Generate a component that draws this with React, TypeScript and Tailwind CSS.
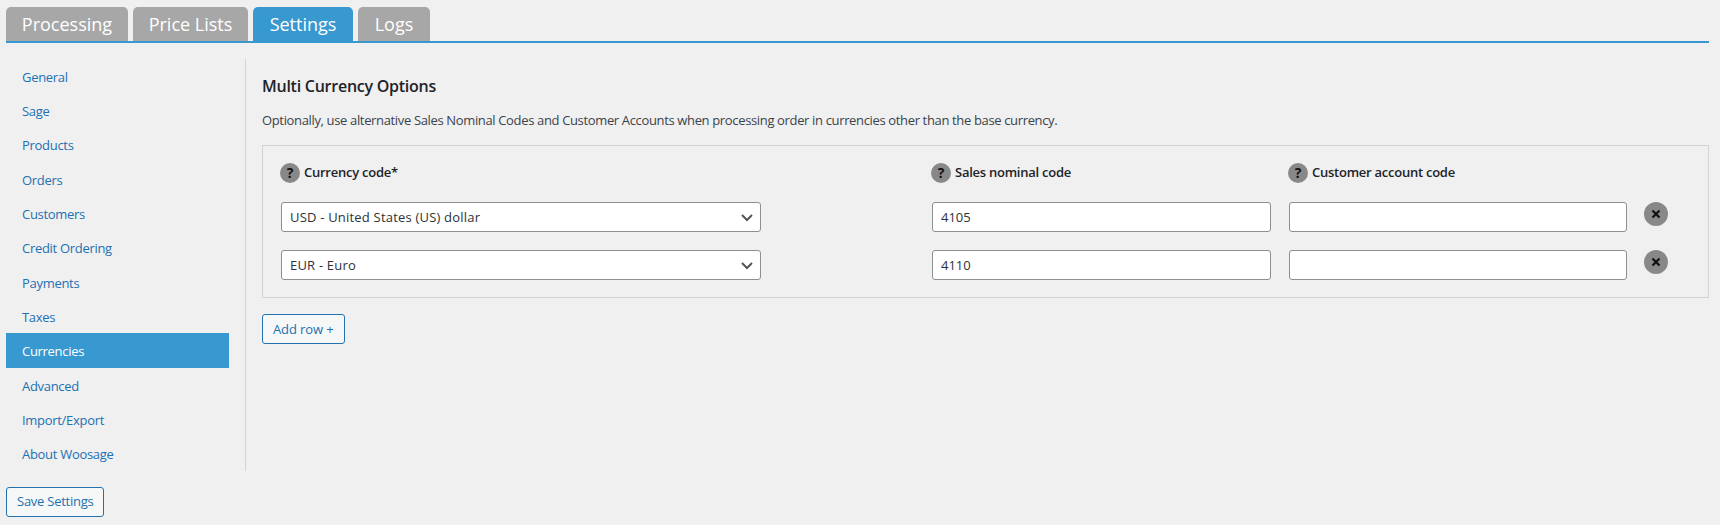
const font = "[font-family:'Open_Sans','Noto_Sans',sans-serif]";

const tabs = [
  { label: "Processing", w: "w-[122px]", active: false },
  { label: "Price Lists", w: "w-[115px]", active: false },
  { label: "Settings", w: "w-[100px]", active: true },
  { label: "Logs", w: "w-[72px]", active: false },
];

const nav = ["General", "Sage", "Products", "Orders", "Customers", "Credit Ordering", "Payments", "Taxes", "Currencies", "Advanced", "Import/Export", "About Woosage"];

function Help() {
  return (
    <span className="flex h-5 w-5 shrink-0 items-center justify-center rounded-full bg-[#888888] text-[14px] font-bold leading-none text-[#111111]">?</span>
  );
}

function Label({ text, className }: { text: string; className: string }) {
  return (
    <div className={`flex items-center gap-[4px] ${className}`}>
      <Help />
      <span className="text-[13px] font-semibold tracking-[-0.25px] text-[#1d2327]">{text}</span>
    </div>
  );
}

function Row({ value, sales }: { value: string; sales: string }) {
  return (
    <div className="flex items-start">
      <div className="relative w-[480px]">
        <select defaultValue={value} className="h-[30px] w-full appearance-none rounded-[3px] border border-[#8c8f94] bg-white pl-[8px] pr-6 pt-[1px] text-[13px] tracking-[0.2px] text-[#2c3338] outline-none">
          <option>{value}</option>
        </select>
        <svg viewBox="0 0 20 20" className="pointer-events-none absolute right-[4px] top-[5px] h-5 w-5" fill="none" stroke="#555555" strokeWidth="2">
          <path d="M5 8l5 5 5-5" />
        </svg>
      </div>
      <input defaultValue={sales} className="ml-[171px] h-[30px] w-[339px] rounded-[3px] border border-[#8c8f94] bg-white px-[8px] text-[13px] text-[#2c3338] outline-none" />
      <input className="ml-[18px] h-[30px] w-[338px] rounded-[3px] border border-[#8c8f94] bg-white px-[8px] text-[13px] outline-none" />
      <span className="ml-[17px] flex h-6 w-6 items-center justify-center rounded-full bg-[#888888]">
        <svg viewBox="0 0 10 10" className="h-[10px] w-[10px]" stroke="#111111" strokeWidth="2.2" fill="none">
          <path d="M1.5 1.5l7 7M8.5 1.5l-7 7" />
        </svg>
      </span>
    </div>
  );
}

function Btn({ children, className }: { children: string; className: string }) {
  return (
    <button className={`flex h-[30px] items-center rounded-[3px] border border-[#2271b1] bg-[#f6f7f7] px-[10px] pt-[1px] text-[13px] text-[#2271b1] ${className}`}>{children}</button>
  );
}

export default function App() {
  return (
    <div className={`${font} h-[525px] w-[1720px] overflow-hidden bg-[#f0f0f1] pl-[6px] pr-[11px] pt-[7px]`}>
      <div className="flex h-[36px] items-start gap-[5px] border-b-2 border-[#3898d0]">
        {tabs.map((t) => (
          <div key={t.label} className={`flex h-[34px] ${t.w} items-center justify-center rounded-t-[5px] pt-[1px] text-[18px] text-white ${t.active ? "bg-[#3898d0]" : "bg-[#a7a7a7]"}`}>
            {t.label}
          </div>
        ))}
      </div>
      <div className="mt-[16px] flex">
        <div className="w-[240px] border-r border-[#d4d4d4] pr-[16px]">
          {nav.map((n) => (
            <div key={n} className={`flex h-[34.3px] items-center pl-[16px] pt-[3px] text-[13px] tracking-[-0.3px] ${n === "Currencies" ? "bg-[#3898d0] text-white" : "text-[#2271b1]"}`}>
              {n}
            </div>
          ))}
        </div>
        <div className="flex-1 pl-[16px] pt-[15px]">
          <h2 className="text-[16px] font-semibold leading-[24px] tracking-[-0.25px] text-[#1d2327]">Multi Currency Options</h2>
          <p className="mt-[12px] text-[13px] leading-[20px] tracking-[-0.35px] text-[#3c434a]">Optionally, use alternative Sales Nominal Codes and Customer Accounts when processing order in currencies other than the base currency.</p>
          <div className="mt-[15px] h-[153px] w-[1447px] border border-[#d4d4d4] pl-[18px] pr-[15px] pt-[17px]">
            <div className="-ml-[1px] flex items-center">
              <Label text="Currency code*" className="w-[651px]" />
              <Label text="Sales nominal code" className="w-[357px]" />
              <Label text="Customer account code" className="w-[300px]" />
            </div>
            <div className="mt-[19px] flex flex-col gap-[18px]">
              <Row value="USD - United States (US) dollar" sales="4105" />
              <Row value="EUR - Euro" sales="4110" />
            </div>
          </div>
          <div className="mt-[16px] flex">
            <Btn className="w-[83px] tracking-[-0.1px]">Add row +</Btn>
          </div>
        </div>
      </div>
      <div className="mt-[16px] flex">
        <Btn className="tracking-[-0.25px]">Save Settings</Btn>
      </div>
    </div>
  );
}
